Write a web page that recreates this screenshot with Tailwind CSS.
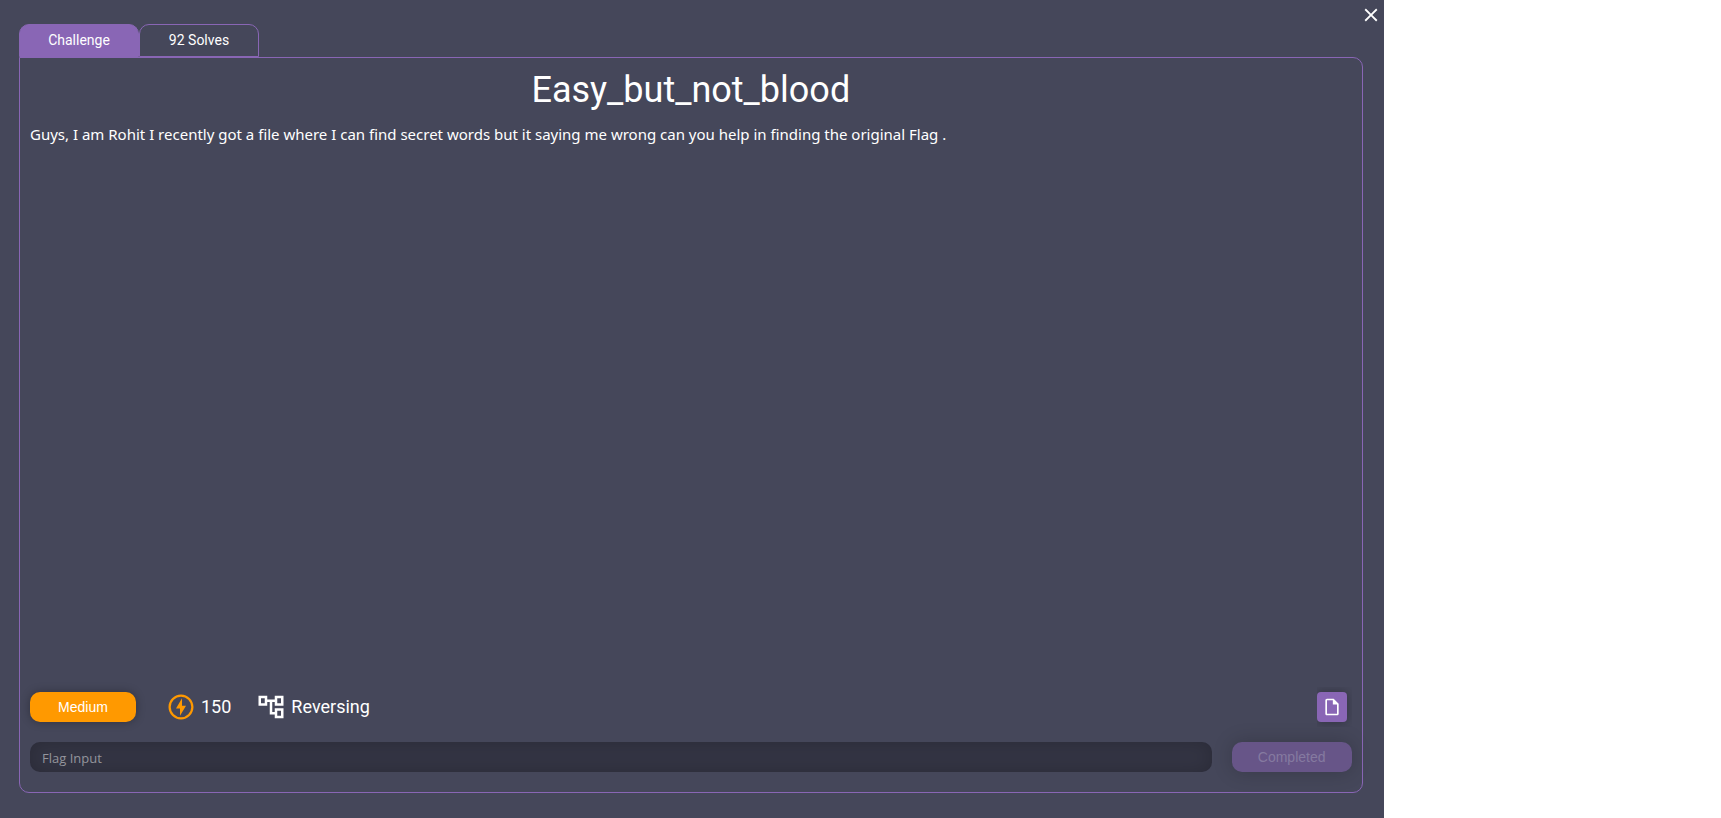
<!DOCTYPE html>
<html lang="en">
<head>
<meta charset="utf-8">
<meta name="viewport" content="width=device-width, initial-scale=1">
<title>Easy_but_not_blood</title>
<script src="https://cdn.jsdelivr.net/npm/@tailwindcss/browser@4"></script>
</head>
<body class="bg-white font-[Roboto,sans-serif] text-white">
<main class="relative flex min-h-screen w-[80.4%] flex-col bg-[#45475a] pt-6 pr-[21px] pb-[25px] pl-[19px]">
  <button type="button" aria-label="Close" class="absolute top-[3px] right-px flex size-6 items-center justify-center">
    <svg class="size-[22px]" viewBox="0 0 24 24" fill="currentColor" aria-hidden="true"><path d="M19 6.41 17.59 5 12 10.59 6.41 5 5 6.41 10.59 12 5 17.59 6.41 19 12 13.41 17.59 19 19 17.59 13.41 12z"/></svg>
  </button>
  <div role="tablist" class="flex text-sm">
    <button type="button" role="tab" aria-selected="true" class="h-[33px] w-[120px] rounded-t-[10px] border border-[#8966b5] bg-[#8966b5] pb-0.5">Challenge</button>
    <button type="button" role="tab" aria-selected="false" class="h-[33px] w-[120px] rounded-t-[10px] border border-[#8966b5] pb-0.5">92 Solves</button>
  </div>
  <section class="flex flex-1 flex-col rounded-[10px] rounded-tl-none border border-[#8966b5] px-2.5 pb-5">
    <h1 class="mt-2 text-center text-4xl leading-12">Easy_but_not_blood</h1>
    <p class="mt-2 flex-1 font-['Noto_Sans',sans-serif] text-[15px] leading-6">Guys, I am Rohit I recently got a file where I can find secret words but it saying me wrong can you help in finding the original Flag .</p>
    <div class="flex h-10 items-center text-lg">
      <span class="flex h-[30px] w-[106px] items-center justify-center rounded-[10px] bg-[#ff9900] font-['Liberation_Sans',sans-serif] text-sm shadow-[0_0_10px_rgba(0,0,0,0.3)]">Medium</span>
      <span class="ml-[30px] flex items-center gap-[5px]">
        <svg class="size-[30px] text-[#ff9900]" viewBox="0 0 24 24" fill="currentColor" aria-hidden="true"><path d="M12 2C6.480 2 2 6.480 2 12s4.480 10 10 10 10-4.480 10-10S17.520 2 12 2zm0 18.200a8.200 8.200 0 1 1 0-16.400 8.200 8.200 0 0 1 0 16.400zM12.800 5 8 13.200h3.200V19L16 10.900h-3.200z"/></svg>
        150
      </span>
      <span class="ml-[25px] flex items-center gap-[5px]">
        <svg class="size-[30px]" viewBox="0 0 24 24" fill="currentColor" aria-hidden="true"><path d="M22 11V3h-7v3H9V3H2v8h7V8h2v10h4v3h7v-8h-7v3h-2V8h2v3h7zM7 9H4V5h3v4zm10 6h3v4h-3v-4zm0-10h3v4h-3V5z"/></svg>
        Reversing
      </span>
      <span class="ml-auto overflow-hidden py-[5px] pr-[5px]">
        <button type="button" aria-label="Download file" class="flex size-[30px] items-center justify-center rounded bg-[#8966b5] shadow-[0_0_10px_rgba(0,0,0,0.3)]">
          <svg class="size-5" viewBox="0 0 24 24" fill="currentColor" aria-hidden="true"><path d="M14 2H6c-1.100 0-1.990.9-1.990 2L4 20c0 1.100.89 2 1.990 2H18c1.100 0 2-.9 2-2V8l-6-6zM6 20V4h7v5h5v11H6z"/></svg>
        </button>
      </span>
    </div>
    <form class="mt-[15px] flex gap-5">
      <input type="text" aria-label="Flag Input" placeholder="Flag Input" class="h-[30px] min-w-0 flex-1 rounded-[10px] bg-[#343544] px-3 pt-0.5 font-['Open_Sans',sans-serif] text-[13px] shadow-[inset_0_0_20px_rgba(0,0,0,0.2)] outline-none placeholder:text-[#94959c]">
      <button type="submit" disabled class="h-[30px] w-[120px] rounded-[10px] bg-[#675588] font-['Liberation_Sans',sans-serif] text-sm text-[#857aa0] shadow-[0_0_20px_rgba(0,0,0,0.2)]">Completed</button>
    </form>
  </section>
</main>
</body>
</html>
